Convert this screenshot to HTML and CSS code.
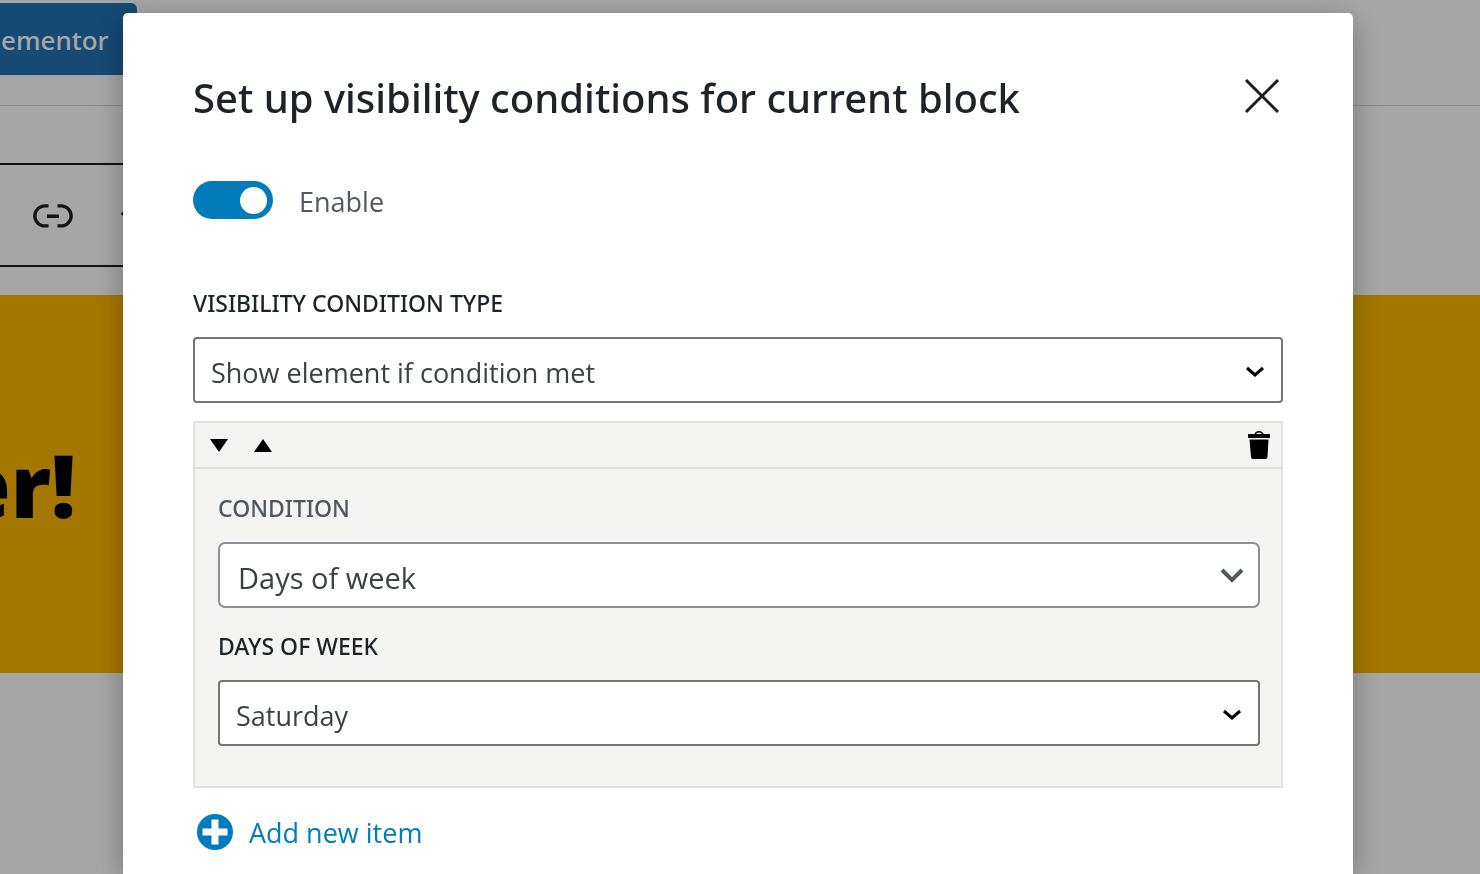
FILE: index.html
```html
<!DOCTYPE html>
<html lang="en">
  <head>
    <meta charset="UTF-8">
    <meta name="viewport" content="width=device-width, initial-scale=1.0">
    <title>Visibility conditions</title>
    <link rel="stylesheet" href="styles.css">
  </head>
  <body>
    <div class="editor">
      <header class="editor-header">
        <button type="button" class="editor-button">ementor</button>
      </header>
      <div class="toolbar">
        <button type="button" class="toolbar-button" aria-label="Link">
          <svg viewBox="0 0 24 24" width="54" height="54"><path d="M15.6 7.2H14v1.5h1.6c2 0 3.7 1.7 3.7 3.7s-1.7 3.7-3.7 3.7H14v1.5h1.6c2.8 0 5.2-2.3 5.2-5.2 0-2.9-2.3-5.2-5.2-5.2zM4.7 12.4c0-2 1.7-3.7 3.7-3.7H10V7.2H8.4c-2.9 0-5.2 2.3-5.2 5.2 0 2.9 2.3 5.2 5.2 5.2H10v-1.5H8.4c-2 0-3.7-1.7-3.7-3.7zm4.6.9h5.3v-1.5H9.3v1.5z"/></svg>
        </button>
        <button type="button" class="toolbar-button" aria-label="More">
          <svg viewBox="0 0 24 24" width="54" height="54"><path d="M17.5 11.6L12 16l-5.5-4.4.9-1.2L12 14l4.5-3.6 1 1.2z"/></svg>
        </button>
      </div>
      <section class="banner">
        <h1 class="banner-title">er!</h1>
      </section>
    </div>

    <div class="overlay">
      <div class="modal" role="dialog" aria-modal="true" aria-labelledby="modalTitle">
        <div class="modal-header">
          <h2 class="modal-title" id="modalTitle">Set up visibility conditions for current block</h2>
          <button type="button" class="icon-button" aria-label="Close">
            <svg class="close-icon" viewBox="0 0 42 42" width="42" height="42"><path d="M5 4L37 36M37 4L5 36"/></svg>
          </button>
        </div>

        <div class="toggle-row">
          <input type="checkbox" class="toggle" id="enable" checked>
          <label class="toggle-label" for="enable">Enable</label>
        </div>

        <div class="field">
          <label class="field-label" for="conditionType">Visibility condition type</label>
          <div class="select-wrap">
            <select class="select" id="conditionType">
              <option>Show element if condition met</option>
            </select>
            <svg class="arrow" viewBox="0 0 24 24" width="24" height="24"><path d="M4 10L12 17L20 10"/></svg>
          </div>
        </div>

        <div class="panel">
          <div class="panel-header">
            <button type="button" class="icon-button" aria-label="Move down">
              <svg viewBox="0 0 18 14" width="18" height="14"><path d="M0 1H18L9 14z"/></svg>
            </button>
            <button type="button" class="icon-button" aria-label="Move up">
              <svg viewBox="0 0 18 14" width="18" height="14"><path d="M0 14H18L9 1z"/></svg>
            </button>
            <button type="button" class="icon-button remove" aria-label="Remove">
              <svg viewBox="0 0 24 28" width="24" height="28"><path d="M1 3H7.500Q8.500 0 12 0T16.500 3H23V7H1zM9 3H15Q14.500 1.500 12 1.500T9 3zM2.500 8.500H21.500L20.500 26Q20.300 28 18.500 28H6Q4.200 28 4 26z" fill-rule="evenodd"/></svg>
            </button>
          </div>
          <div class="panel-body">
            <label class="field-label muted" for="condition">Condition</label>
            <div class="select-wrap">
              <select class="select select-large" id="condition">
                <option>Days of week</option>
              </select>
              <svg class="arrow arrow-large" viewBox="0 0 24 24" width="24" height="24"><path d="M2 7L12 17L22 7"/></svg>
            </div>
            <label class="field-label" for="days">Days of week</label>
            <div class="select-wrap">
              <select class="select" id="days">
                <option>Saturday</option>
              </select>
              <svg class="arrow" viewBox="0 0 24 24" width="24" height="24"><path d="M4 10L12 17L20 10"/></svg>
            </div>
          </div>
        </div>

        <button type="button" class="add-button">
          <svg viewBox="0 0 36 36" width="36" height="36"><circle cx="18" cy="18" r="18"/><path d="M14.500 5.500H21.500V14.500H30.500V21.500H21.500V30.500H14.500V21.500H5.500V14.500H14.500z" fill="#fff"/></svg>
          <span>Add new item</span>
        </button>
      </div>
    </div>
  </body>
</html>
```

FILE: styles.css
```css
:root {
  --primary-color: #007cba;
  --text-color: #1e2327;
  --muted-color: #50575e;
  --border-color: #757575;
  --panel-border: #e0e0e0;
  --panel-bg: #f4f4f3;
}

* {
  box-sizing: border-box;
}

body {
  margin: 0;
  height: 100vh;
  overflow: hidden;
  font-family: "Open Sans", "Noto Sans", sans-serif;
  color: var(--text-color);
  background: #fff;
}

button {
  font: inherit;
  border: none;
  background: none;
  padding: 0;
  cursor: pointer;
}

svg {
  display: block;
  flex: none;
}

/* Editor behind the modal */
.editor-header {
  height: 106px;
  padding-top: 3px;
  border-bottom: 1px solid #d5d5d5;
}

.editor-button {
  width: 137px;
  height: 72px;
  padding: 2px 0 0 1px;
  text-align: left;
  font-family: "Noto Sans", sans-serif;
  font-size: 26px;
  font-weight: 500;
  color: #fff;
  background: #2271b1;
  border-radius: 0 6px 6px 0;
}

.toolbar {
  display: flex;
  align-items: center;
  gap: 26px;
  width: 60%;
  height: 104px;
  margin-top: 57px;
  padding-left: 26px;
  border-top: 2px solid #1e1e1e;
  border-bottom: 2px solid #1e1e1e;
}

.toolbar-button {
  fill: #1e1e1e;
}

.banner {
  display: flex;
  align-items: center;
  height: 378px;
  margin-top: 28px;
  background: #fcb700;
}

.banner-title {
  display: flex;
  justify-content: flex-end;
  width: 76px;
  margin: 0;
  font-size: 86px;
  font-weight: 800;
  color: #000;
}

/* Modal */
.overlay {
  position: fixed;
  inset: 0;
  display: flex;
  padding: 13px 127px 0 123px;
  background: rgba(0, 0, 0, 0.35);
}

.modal {
  flex: 1;
  padding: 54px 70px 0;
  background: #fff;
  border-radius: 5px 5px 0 0;
  box-shadow: 0 6px 30px rgba(0, 0, 0, 0.3);
}

.modal-header {
  display: flex;
  justify-content: space-between;
  align-items: center;
  height: 60px;
}

.modal-title {
  margin: 0;
  padding-top: 2px;
  font-family: "Noto Sans", sans-serif;
  font-size: 40px;
  font-weight: 500;
  line-height: 60px;
  white-space: nowrap;
}

.icon-button {
  display: flex;
}

.close-icon {
  fill: none;
  stroke: #1e1e1e;
  stroke-width: 3;
}

.toggle-row {
  display: flex;
  align-items: center;
  gap: 26px;
  height: 40px;
  margin-top: 53px;
}

.toggle {
  appearance: none;
  display: flex;
  justify-content: flex-end;
  align-items: center;
  width: 80px;
  height: 38px;
  margin: 0;
  padding-right: 6px;
  background: var(--primary-color);
  border-radius: 20px;
}

.toggle::before {
  content: "";
  width: 27px;
  height: 27px;
  background: #fff;
  border-radius: 50%;
}

.toggle-label {
  padding-top: 2px;
  font-size: 27px;
  color: var(--muted-color);
}

.field {
  margin-top: 67px;
}

.field-label {
  display: block;
  font-family: "Noto Sans", sans-serif;
  font-size: 23px;
  font-weight: 500;
  line-height: 32px;
  text-transform: uppercase;
}

.muted {
  color: var(--muted-color);
}

.select-wrap {
  display: grid;
  align-items: center;
  margin-top: 18px;
}

.select-wrap > * {
  grid-area: 1 / 1;
}

.select {
  appearance: none;
  width: 100%;
  height: 66px;
  padding: 4px 60px 0 16px;
  font-family: inherit;
  font-size: 27px;
  color: #3c4146;
  background: #fff;
  border: 2px solid var(--border-color);
  border-radius: 4px;
}

.select-large {
  padding-left: 18px;
  font-size: 29px;
  border-color: #8c8f94;
  border-radius: 7px;
}

.arrow {
  justify-self: end;
  margin-right: 16px;
  fill: none;
  stroke: #000;
  stroke-width: 3;
  pointer-events: none;
}

.arrow-large {
  stroke: #50575e;
  stroke-width: 4;
}

.panel {
  margin-top: 18px;
  background: var(--panel-bg);
  border: 2px solid var(--panel-border);
}

.panel-header {
  display: flex;
  align-items: center;
  gap: 26px;
  height: 46px;
  padding: 0 10px 0 15px;
  border-bottom: 2px solid var(--panel-border);
}

.remove {
  margin-left: auto;
}

.panel-body {
  padding: 23px 21px 40px 23px;
}

.panel-body .select-wrap {
  margin-bottom: 22px;
}

.panel-body .select-wrap:last-child {
  margin-bottom: 0;
}

.add-button {
  display: flex;
  align-items: center;
  gap: 16px;
  margin: 24px 0 0 4px;
  font-size: 27px;
  color: var(--primary-color);
  fill: var(--primary-color);
}

.add-button span {
  padding-top: 2px;
}
```
